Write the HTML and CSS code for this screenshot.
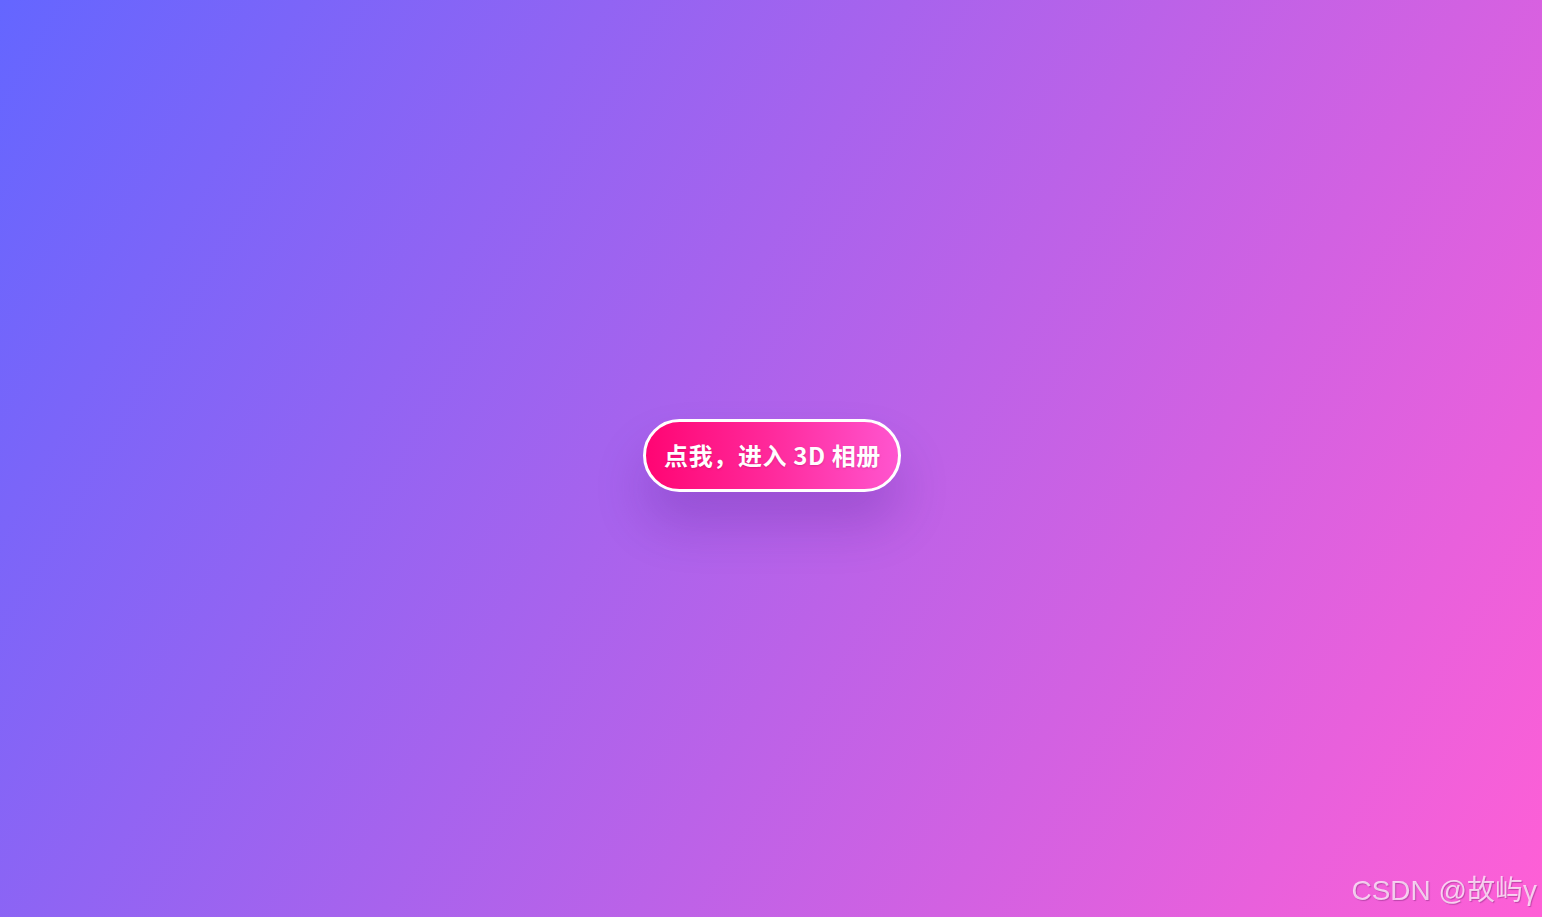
FILE: index.html
```html
<!DOCTYPE html>
<html lang="zh-CN">
<head>
<meta charset="utf-8">
<title>3D 相册</title>
<link rel="stylesheet" href="styles.css">
</head>
<body>
<main class="stage">
  <button class="enter-btn" type="button">点我，进入 3D 相册</button>
</main>
<div class="watermark">CSDN @故屿γ</div>
</body>
</html>
```
FILE: styles.css
```css
html, body {
  margin: 0;
  height: 100%;
}
body {
  background: linear-gradient(120deg, #6466ff 0%, #ff5fd6 100%);
  font-family: "Noto Sans CJK SC", "Noto Sans", sans-serif;
  overflow: hidden;
}
.stage {
  height: 100%;
  display: flex;
  align-items: center;
  justify-content: center;
}
.enter-btn {
  margin-top: -6px;
  margin-left: 2px;
  padding: 17px 17px 18px 18px;
  border: 3px solid #ffffff;
  border-radius: 40px;
  background: linear-gradient(90deg, #ff0573 0%, #ff2a9c 50%, #ff55cf 100%);
  color: #ffffff;
  font-family: "Noto Sans CJK SC", "Noto Sans", sans-serif;
  font-weight: 700;
  font-size: 24px;
  line-height: 32px;
  letter-spacing: 0.6px;
  box-shadow: 0 32px 50px rgba(70, 20, 130, 0.22);
  text-shadow: 0 1px 2px rgba(120, 0, 60, 0.25);
  cursor: pointer;
}
.watermark {
  position: fixed;
  right: 5px;
  bottom: 9px;
  color: rgba(255, 255, 255, 0.72);
  font-family: "Liberation Sans", "Noto Sans CJK SC", sans-serif;
  font-size: 28px;
  line-height: 34px;
  text-shadow: 1px 1px 1px rgba(90, 20, 90, 0.35);
}
```
